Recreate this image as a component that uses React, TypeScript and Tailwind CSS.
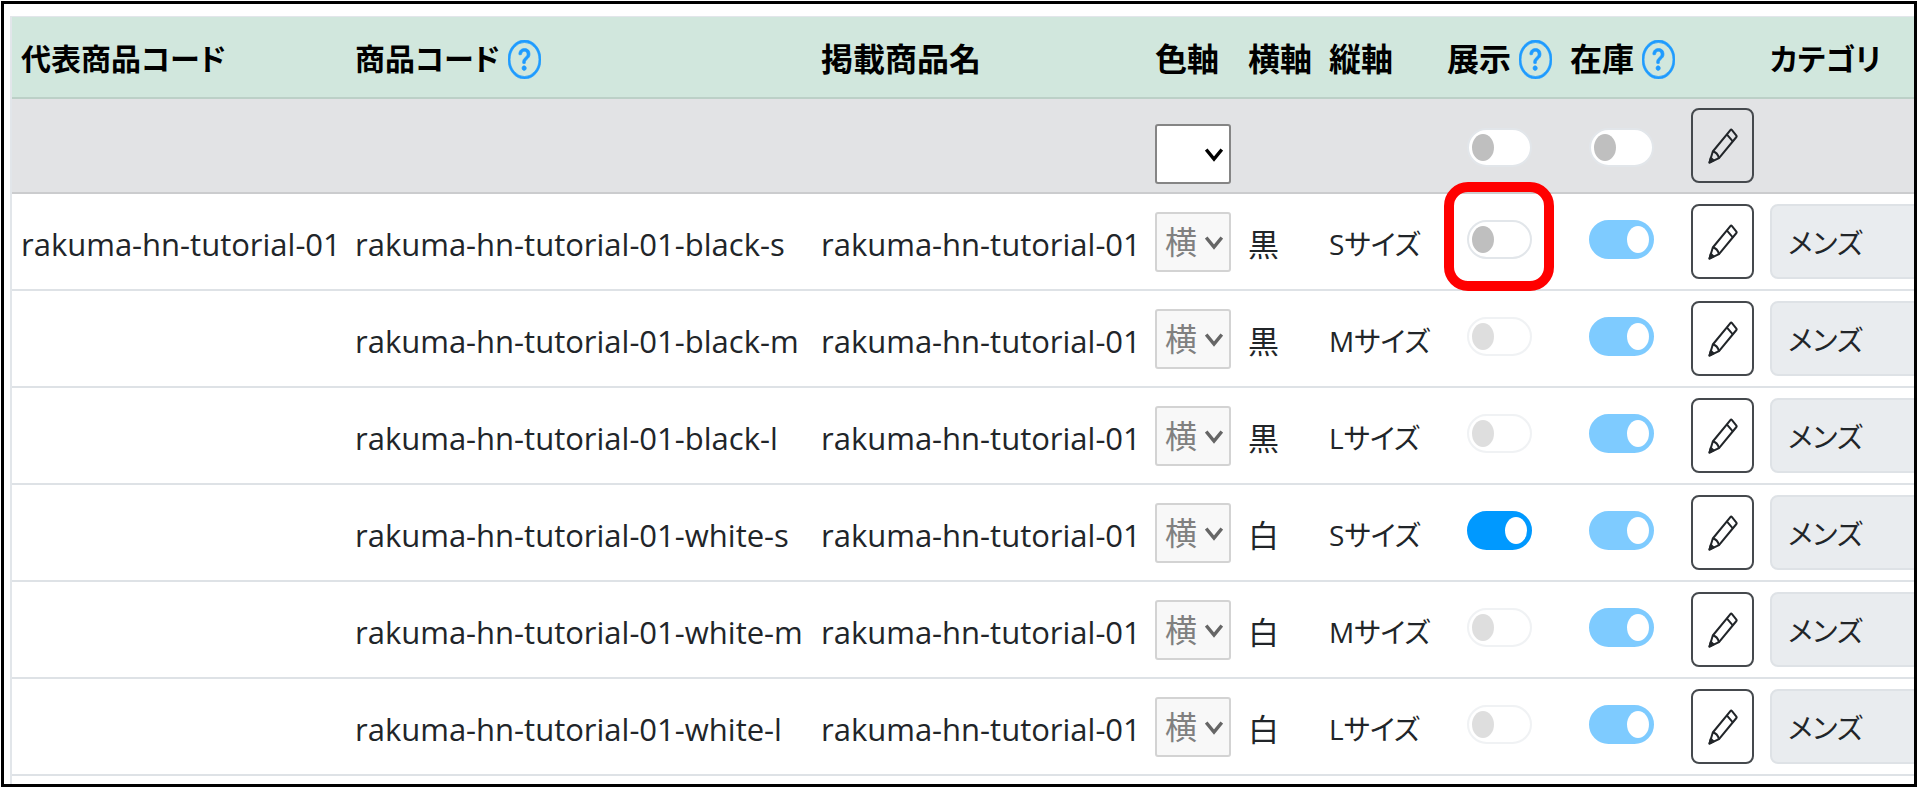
import { useState } from "react";
import { BsQuestionCircle } from "react-icons/bs";

type Item = {
  parent: string;
  code: string;
  name: string;
  color: string;
  size: string;
  display: boolean;
  displayLocked: boolean;
};

const NAME = "rakuma-hn-tutorial-01";

const ITEMS: Item[] = [
  { parent: NAME, code: `${NAME}-black-s`, name: NAME, color: "黒", size: "Sサイズ", display: false, displayLocked: false },
  { parent: "", code: `${NAME}-black-m`, name: NAME, color: "黒", size: "Mサイズ", display: false, displayLocked: true },
  { parent: "", code: `${NAME}-black-l`, name: NAME, color: "黒", size: "Lサイズ", display: false, displayLocked: true },
  { parent: "", code: `${NAME}-white-s`, name: NAME, color: "白", size: "Sサイズ", display: true, displayLocked: false },
  { parent: "", code: `${NAME}-white-m`, name: NAME, color: "白", size: "Mサイズ", display: false, displayLocked: true },
  { parent: "", code: `${NAME}-white-l`, name: NAME, color: "白", size: "Lサイズ", display: false, displayLocked: true },
];

const COLUMNS = [
  { label: "代表商品コード", width: "w-[334px]", text: "text-[30px]", help: false },
  { label: "商品コード", width: "w-[466px]", text: "text-[30px]", help: true },
  { label: "掲載商品名", width: "w-[334px]", text: "text-[32px]", help: false },
  { label: "色軸", width: "w-[93px]", text: "text-[32px]", help: false },
  { label: "横軸", width: "w-[81px]", text: "text-[32px]", help: false },
  { label: "縦軸", width: "w-[118px]", text: "text-[32px]", help: false },
  { label: "展示", width: "w-[123px]", text: "text-[32px]", help: true },
  { label: "在庫", width: "w-[121px]", text: "text-[32px]", help: true },
  { label: "", width: "w-[79px]", text: "text-[32px]", help: false },
  { label: "カテゴリ", width: "w-auto", text: "text-[30px]", help: false },
];

function Toggle({
  label,
  checked,
  disabled = false,
  onChange,
}: {
  label: string;
  checked: boolean;
  disabled?: boolean;
  onChange?: (value: boolean) => void;
}) {
  return (
    <input
      type="checkbox"
      role="switch"
      aria-label={label}
      checked={checked}
      disabled={disabled}
      onChange={(e) => onChange?.(e.target.checked)}
      className="flex h-[39px] w-[65px] shrink-0 appearance-none items-center rounded-full border-2 border-[#e2e6ea] bg-white px-[3px] before:h-[27px] before:w-[22px] before:rounded-[50%] before:bg-[#bfbfbf] checked:justify-end checked:border-[#0099ff] checked:bg-[#0099ff] checked:before:bg-white disabled:opacity-50"
    />
  );
}

function AxisSelect({ value, disabled = false }: { value: string; disabled?: boolean }) {
  return (
    <div className="relative w-[76px]">
      <select
        aria-label="色軸"
        defaultValue={value}
        disabled={disabled}
        className="block h-[60px] w-full appearance-none rounded-[3px] border-2 border-[#858585] bg-white pl-2 text-[32px] text-black disabled:border-[#d3d3d3] disabled:bg-[#f8f8f8] disabled:text-[#808080] disabled:opacity-100"
      >
        <option value=""></option>
        <option value="横">横</option>
        <option value="縦">縦</option>
      </select>
      <svg
        viewBox="0 0 18 14"
        className={`pointer-events-none absolute top-6 right-2 h-[14px] w-[18px] ${disabled ? "text-[#666666]" : "text-black"}`}
        fill="none"
        stroke="currentColor"
        strokeWidth="3.4"
      >
        <path d="M1.2 1.5 9 11l7.8-9.5" />
      </svg>
    </div>
  );
}

function EditButton() {
  return (
    <button
      type="button"
      aria-label="編集"
      className="flex h-[75px] w-[63px] items-center justify-center rounded-lg border-2 border-[#45494d] text-[#212529]"
    >
      <svg
        viewBox="0 0 30 36"
        className="h-[36px] w-[30px]"
        fill="none"
        stroke="currentColor"
        strokeWidth="2"
        strokeLinejoin="round"
      >
        <path d="M1.5 34.5 4.8 23.5 22.6 1.8Q23.2 1.2 23.8 1.9L28.4 7.6Q28.9 8.3 28.4 9L11 30.2Z" />
        <path d="M4.8 23.5Q9.6 24.4 11 30.2M18.8 6.4 25 13.6" />
        <path d="M1.5 34.5 2.8 29.8 5.6 32.4Z" fill="currentColor" />
      </svg>
    </button>
  );
}

export default function App() {
  const [items, setItems] = useState(ITEMS);
  const [allDisplay, setAllDisplay] = useState(false);
  const [allStock, setAllStock] = useState(false);

  const setDisplay = (code: string, value: boolean) =>
    setItems((prev) => prev.map((item) => (item.code === code ? { ...item, display: value } : item)));

  return (
    <div className="bg-white p-px font-['Open_Sans','Noto_Sans_CJK_JP',sans-serif] text-[#212529]">
      <div className="overflow-hidden border-[3px] border-black pt-3 pl-[6px]">
        <div className="overflow-hidden border-t border-l-2 border-[#e2e6ea] pb-2">
          <table className="w-full table-fixed border-separate border-spacing-0 text-left text-[31px] leading-10 whitespace-nowrap [font-feature-settings:'palt']">
            <colgroup>
              {COLUMNS.map((column, i) => (
                <col key={i} className={column.width} />
              ))}
            </colgroup>
            <thead>
              <tr className="h-[82px] bg-[#d1e7dd] text-black">
                {COLUMNS.map((column, i) => (
                  <th key={i} className={`border-b-2 border-[#bcd0c7] px-[9px] pt-1 font-bold ${column.text}`}>
                    <div className="flex items-center gap-2">
                      {column.label}
                      {column.help && (
                        <BsQuestionCircle
                          preserveAspectRatio="none"
                          className="h-[39px] w-[33px] shrink-0 stroke-[0.3] text-[#1e9bff]"
                        />
                      )}
                    </div>
                  </th>
                ))}
              </tr>
            </thead>
            <tbody>
              {/* Bulk edit row */}
              <tr className="h-[95px] bg-[#e2e3e5] *:border-b-2 *:border-[#cbccce] *:px-[9px]">
                <td />
                <td />
                <td />
                <td className="pt-4">
                  <AxisSelect value="" />
                </td>
                <td />
                <td />
                <td className="pt-1">
                  <div className="flex justify-center">
                    <Toggle label="展示 一括" checked={allDisplay} onChange={setAllDisplay} />
                  </div>
                </td>
                <td className="pt-1">
                  <div className="flex justify-center">
                    <Toggle label="在庫 一括" checked={allStock} onChange={setAllStock} />
                  </div>
                </td>
                <td>
                  <EditButton />
                </td>
                <td />
              </tr>

              {items.map((item, i) => (
                <tr key={item.code} className="h-[97px] *:border-b-2 *:border-[#dee2e6] *:px-[9px]">
                  <td className="pt-1">{item.parent}</td>
                  <td className="pt-1">{item.code}</td>
                  <td className="pt-1">{item.name}</td>
                  <td>
                    <AxisSelect value="横" disabled />
                  </td>
                  <td className="pt-1">{item.color}</td>
                  <td className="pt-1 text-[28px]">{item.size}</td>
                  <td className="pb-1">
                    <div className="flex justify-center">
                      <div className="relative">
                        <Toggle
                          label={`展示 ${item.code}`}
                          checked={item.display}
                          disabled={item.displayLocked}
                          onChange={(value) => setDisplay(item.code, value)}
                        />
                        {/* Highlight on the first switch */}
                        {i === 0 && (
                          <span className="pointer-events-none absolute -top-[38px] -left-[23px] h-[109px] w-[110px] rounded-3xl border-10 border-[#ff0000]" />
                        )}
                      </div>
                    </div>
                  </td>
                  <td className="pb-1">
                    <div className="flex justify-center">
                      <Toggle label={`在庫 ${item.code}`} checked disabled />
                    </div>
                  </td>
                  <td>
                    <EditButton />
                  </td>
                  <td>
                    <input
                      type="text"
                      aria-label={`カテゴリ ${item.code}`}
                      value="メンズ"
                      readOnly
                      className="block h-[75px] w-[320px] rounded-lg border-2 border-[#dee2e6] bg-[#e9ecef] px-4 text-[28px]"
                    />
                  </td>
                </tr>
              ))}
            </tbody>
          </table>
        </div>
      </div>
    </div>
  );
}
